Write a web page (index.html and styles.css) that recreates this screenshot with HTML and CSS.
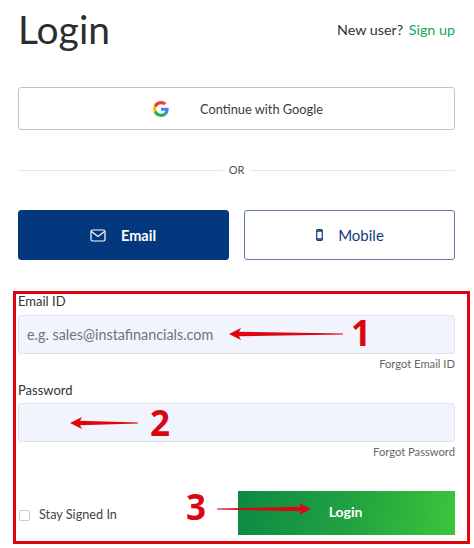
FILE: index.html
```html
<!DOCTYPE html>
<html lang="en">
<head>
    <meta charset="UTF-8">
    <meta name="viewport" content="width=device-width, initial-scale=1.0">
    <title>Login</title>
    <link rel="stylesheet" href="styles.css">
</head>
<body>

    <!-- title row -->
    <div class="top-row">
        <h1>Login</h1>
        <p class="new-user">New user? <a href="#">Sign up</a></p>
    </div>

    <button class="google-btn">
        <svg class="g-icon" viewBox="0 0 48 48" width="16" height="16">
            <path fill="#EA4335" d="M24 9.500c3.500 0 6.700 1.300 9.100 3.500l6.800-6.800C35.800 2.400 30.300 0 24 0 14.600 0 6.500 5.400 2.600 13.200l7.900 6.200C12.400 13.600 17.700 9.500 24 9.500z"/>
            <path fill="#4285F4" d="M46.900 24.500c0-1.600-.1-3.100-.4-4.500H24v9h12.900c-.6 3-2.300 5.500-4.800 7.200l7.700 6c4.500-4.200 7.100-10.300 7.100-17.700z"/>
            <path fill="#FBBC05" d="M10.500 28.600c-.5-1.400-.8-3-.8-4.600s.3-3.200.8-4.600l-7.900-6.200C.9 16.500 0 20.100 0 24s.9 7.500 2.600 10.800l7.900-6.200z"/>
            <path fill="#34A853" d="M24 48c6.500 0 11.900-2.100 15.900-5.800l-7.700-6c-2.200 1.400-4.900 2.300-8.200 2.300-6.300 0-11.600-4.100-13.500-9.900l-7.900 6.200C6.500 42.600 14.600 48 24 48z"/>
        </svg>
        <span>Continue with Google</span>
    </button>

    <div class="divider"><span>OR</span></div>

    <!-- email / mobile tabs -->
    <div class="tabs">
        <button class="tab tab-active">
            <svg viewBox="0 0 16 13" width="16" height="13" fill="none" stroke="currentColor" stroke-width="1.200">
                <rect x="1" y="1" width="14" height="11" rx="1.500"/>
                <path d="M1.500 2.500l6.500 5 6.500-5"/>
            </svg>
            <span>Email</span>
        </button>
        <button class="tab tab-mobile">
            <svg viewBox="0 0 7 12" width="7" height="12" fill="none" stroke="currentColor" stroke-width="1.200">
                <rect x="0.700" y="0.700" width="5.600" height="10.600" rx="1"/>
                <path d="M.7 2h5.600M.7 10h5.600" stroke-width="1.400"/>
            </svg>
            <span>Mobile</span>
        </button>
    </div>

    <!-- form with the red annotations on top -->
    <form class="login-form">
        <label>Email ID</label>
        <input type="text" placeholder="e.g. sales@instafinancials.com">
        <a class="forgot" href="#">Forgot Email ID</a>

        <label class="label-password">Password</label>
        <input type="password">
        <a class="forgot" href="#">Forgot Password</a>

        <div class="form-bottom">
            <label class="stay"><span class="box"></span>Stay Signed In</label>
            <button class="login-btn" type="button">Login</button>
        </div>

        <svg class="arrow arrow-1" viewBox="0 0 114 14" width="114" height="14">
            <path fill="#dc0510" d="M0 7L12 1 10 4.800 114 6.600V7.400L10 9.200 12 13z"/>
        </svg>
        <span class="mark mark-1">1</span>
        <svg class="arrow arrow-2" viewBox="0 0 68 14" width="68" height="14">
            <path fill="#dc0510" d="M0 7L12 1 10 4.800 68 6.600V7.400L10 9.200 12 13z"/>
        </svg>
        <span class="mark mark-2">2</span>
        <span class="mark mark-3">3</span>
        <svg class="arrow arrow-3" viewBox="0 0 94 14" width="94" height="14">
            <path fill="#dc0510" d="M94 7L82 1 84 4.800 0 6.500V7.500L84 9.200 82 13z"/>
        </svg>
    </form>

</body>
</html>
```

FILE: styles.css
```css
* { box-sizing: border-box; }
body { margin: 0; padding: 0 19px 0 18px; font-family: Lato, "Open Sans", sans-serif; color: #333; background: #fff; }
button { font-family: inherit; cursor: pointer; }

.top-row { display: flex; justify-content: space-between; align-items: center; height: 58px; }
h1 { margin: 0; font-size: 39px; font-weight: 400; line-height: 58px; color: #2b2d30; }
.new-user { margin: 0; font-size: 14.300px; color: #333; }
.new-user a { margin-left: 2px; color: #12a85a; text-decoration: none; }

.google-btn { display: flex; align-items: center; justify-content: center; gap: 31px; width: 100%; height: 43px; margin-top: 29px; padding: 0 0 0 3px; background: #fff; border: 1px solid #c4c4c4; border-radius: 3px; font-size: 12.800px; color: #3c3c3c; }

.divider { display: flex; align-items: center; gap: 6px; height: 20px; margin-top: 30px; font-size: 11px; color: #555; }
.divider span { margin-top: -2px; }
.divider::before, .divider::after { content: ""; flex: 1; height: 1px; background: #e6e6e6; }

.tabs { display: grid; grid-template-columns: 1fr 1fr; gap: 15px; margin-top: 30px; }
.tab { display: flex; align-items: center; justify-content: center; gap: 15px; height: 50px; padding: 0; border: 1px solid #5f7ba6; border-radius: 3px; background: #fff; color: #13397a; font-size: 15px; }
.tab-active { background: #03387e; border-color: #03387e; color: #fff; font-size: 14.500px; font-weight: 700; padding-right: 1px; }
.tab-mobile { padding-left: 1px; }

.login-form { position: relative; height: 253px; margin: 31px -15px 0 -5px; padding: 0 12px 0 2px; border: 3px solid #dc0510; display: flex; flex-direction: column; }
.login-form > label { display: block; height: 21px; line-height: 14px; font-size: 13px; color: #333; }
.login-form > .label-password { margin-top: 11px; height: 20px; line-height: 14px; }
.login-form > input { display: block; width: 100%; height: 39px; flex: none; padding: 0 8px; background: #f1f4fc; border: 1px solid #dfe2ea; border-radius: 3px; font-family: inherit; font-size: 14.350px; }
.login-form > input::placeholder { color: #6e747c; opacity: 1; }
.forgot { align-self: flex-end; height: 17px; margin-top: 1px; line-height: 17px; font-size: 11.200px; color: #666; text-decoration: none; }

.form-bottom { display: flex; justify-content: space-between; align-items: center; margin-top: 31px; }
.stay { display: flex; align-items: center; gap: 9px; font-size: 12.700px; color: #444; padding: 1px 0 0 1px; }
.box { width: 11px; height: 11px; margin-top: 3px; border: 1px solid #ccc; border-radius: 2px; background: #fff; }
.login-btn { width: 217px; height: 44px; padding: 0 2px 3px 0; border: 0; background: linear-gradient(100deg, #0b8a45 0%, #23a440 55%, #3cc63a 100%); color: #fff; font-size: 14px; font-weight: 700; }

/* annotations */
.arrow { position: absolute; display: block; }
.arrow-1 { left: 213px; top: 33px; }
.arrow-2 { left: 54px; top: 122px; }
.arrow-3 { left: 201px; top: 208px; }
.mark { position: absolute; font-family: "Open Sans", sans-serif; font-weight: 700; font-size: 35px; line-height: 36px; color: #dc0510; }
.mark-1 { left: 335px; top: 21px; }
.mark-2 { left: 134px; top: 111px; }
.mark-3 { left: 170px; top: 195px; }
```
